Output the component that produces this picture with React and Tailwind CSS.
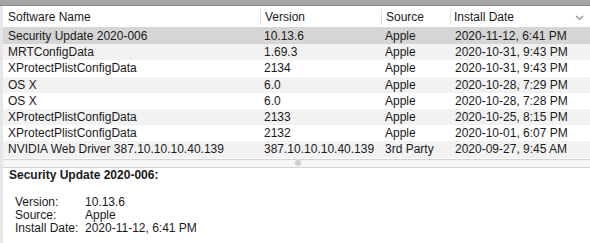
const rows = [
  ["Security Update 2020-006", "10.13.6", "Apple", "2020-11-12, 6:41 PM"],
  ["MRTConfigData", "1.69.3", "Apple", "2020-10-31, 9:43 PM"],
  ["XProtectPlistConfigData", "2134", "Apple", "2020-10-31, 9:43 PM"],
  ["OS X", "6.0", "Apple", "2020-10-28, 7:29 PM"],
  ["OS X", "6.0", "Apple", "2020-10-28, 7:28 PM"],
  ["XProtectPlistConfigData", "2133", "Apple", "2020-10-25, 8:15 PM"],
  ["XProtectPlistConfigData", "2132", "Apple", "2020-10-01, 6:07 PM"],
  ["NVIDIA Web Driver 387.10.10.10.40.139", "387.10.10.10.40.139", "3rd Party", "2020-09-27, 9:45 AM"],
];

const font = { fontFamily: "'Liberation Sans', Arial, sans-serif" };

export default function App() {
  return (
    <div
      className="w-[590px] h-[243px] bg-white text-[12px] text-[#1a1a1a] overflow-hidden flex flex-col"
      style={font}
    >
      {/* toolbar edge */}
      <div className="h-[6px] bg-[#a4a4a4] border-b border-[#8c8c8c]" />

      <div className="flex-1 flex flex-col border-l-[3px] border-[#e6e6e6]">
        {/* header */}
        <div className="h-[22px] flex items-center bg-white border-b border-[#d6d6d6]">
          <div className="w-[257px] pl-[5px]">Software Name</div>
          <div className="w-[121px] h-[16px] flex items-center border-l border-[#dcdcdc] pl-[4px]">Version</div>
          <div className="w-[69px] h-[16px] flex items-center border-l border-[#dcdcdc] pl-[4px]">Source</div>
          <div className="flex-1 h-[16px] flex items-center justify-between border-l border-[#dcdcdc] pl-[3px] pr-[6px]">
            <span>Install Date</span>
            <svg width="9" height="6" viewBox="0 0 9 6" className="mt-[2px]">
              <path d="M1 1l3.5 3.5L8 1" fill="none" stroke="#8a8a8a" strokeWidth="1.1" />
            </svg>
          </div>
        </div>

        {/* rows */}
        <div className="flex flex-col">
          {rows.map((r, i) => (
            <div
              key={i}
              className={`h-[16.2px] flex items-center ${
                i === 0 ? "bg-[#d5d5d5]" : i % 2 === 1 ? "bg-[#f2f2f2]" : "bg-white"
              }`}
            >
              <div className="w-[257px] pl-[5px] whitespace-nowrap">{r[0]}</div>
              <div className="w-[122px] pl-[4px] whitespace-nowrap">{r[1]}</div>
              <div className="w-[70px] pl-[3px] whitespace-nowrap">{r[2]}</div>
              <div className="flex-1 pl-[3px] whitespace-nowrap">{r[3]}</div>
            </div>
          ))}
        </div>

        {/* splitter */}
        <div className="h-[9px] mt-[1px] bg-[#f5f5f5] border-y border-[#d4d4d4] flex items-center justify-center">
          <div className="w-[6px] h-[6px] rounded-full bg-[#cfcfcf] ml-[2px]" />
        </div>

        {/* detail */}
        <div className="flex-1 bg-white pl-[6px]">
          <div className="font-bold text-[12px] leading-[14px]">Security Update 2020-006:</div>
          <div className="mt-[14px] pl-[6px] text-[12px] leading-[13px]">
            <div className="flex">
              <span className="w-[70px]">Version:</span>
              <span>10.13.6</span>
            </div>
            <div className="flex">
              <span className="w-[70px]">Source:</span>
              <span>Apple</span>
            </div>
            <div className="flex">
              <span className="w-[70px]">Install Date:</span>
              <span>2020-11-12, 6:41 PM</span>
            </div>
          </div>
        </div>
      </div>
    </div>
  );
}
